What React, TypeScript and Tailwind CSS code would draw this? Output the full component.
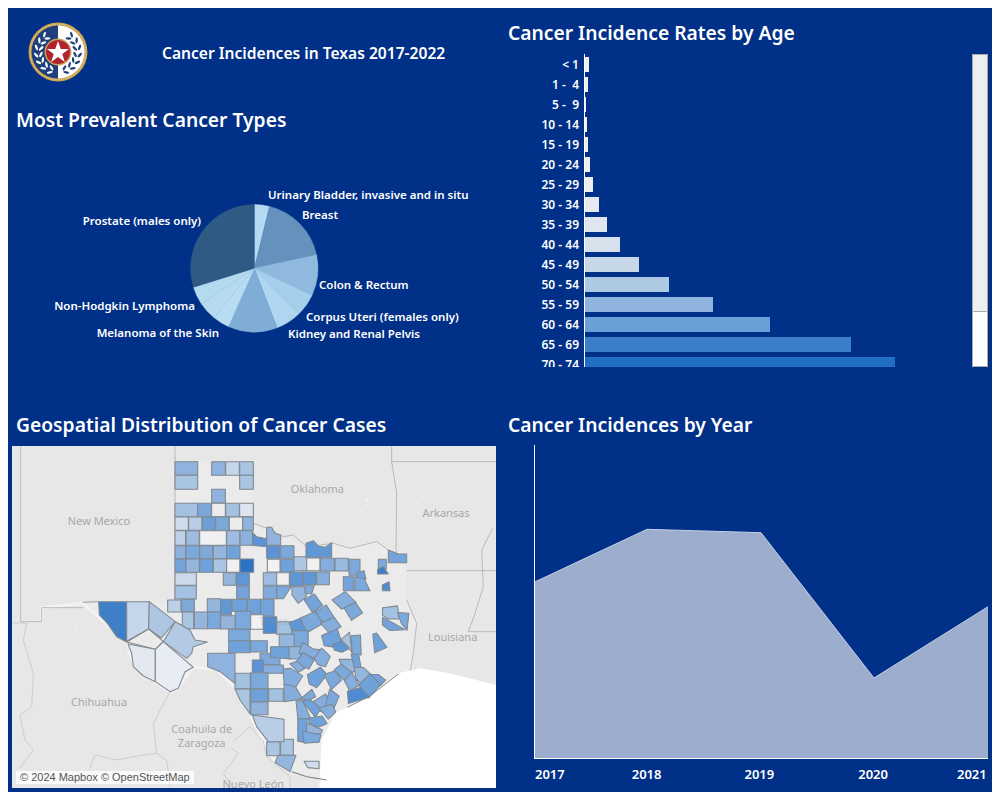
import React from 'react';

const FONT = "font-['Noto_Sans',sans-serif]";

// age bars, colours read off the screenshot
const ageBars = [
  { label: '< 1', w: 4, color: '#f0f0f0' },
  { label: '1 -  4', w: 3, color: '#f0f0f0' },
  { label: '5 -  9', w: 1, color: '#f0f0f0' },
  { label: '10 - 14', w: 2, color: '#f0f0f0' },
  { label: '15 - 19', w: 3, color: '#efefef' },
  { label: '20 - 24', w: 5, color: '#eeeff1' },
  { label: '25 - 29', w: 8, color: '#ebedf0' },
  { label: '30 - 34', w: 14, color: '#e6e9ef' },
  { label: '35 - 39', w: 22, color: '#e0e6ef' },
  { label: '40 - 44', w: 35, color: '#d7e1ec' },
  { label: '45 - 49', w: 54, color: '#c6d7e8' },
  { label: '50 - 54', w: 84, color: '#aec9e3' },
  { label: '55 - 59', w: 128, color: '#8fb4de' },
  { label: '60 - 64', w: 185, color: '#6a9fd7' },
  { label: '65 - 69', w: 266, color: '#3a7fc8' },
  { label: '70 - 74', w: 310, color: '#206fc4' },
];

// clockwise from 12 o'clock, degrees
const pieSlices = [
  { from: 0, to: 13.8, color: '#b5daf1' },
  { from: 13.8, to: 77.8, color: '#6492bd' },
  { from: 77.8, to: 115, color: '#8fbadd' },
  { from: 115, to: 135.6, color: '#a5cfeb' },
  { from: 135.6, to: 159, color: '#aed6f0' },
  { from: 159, to: 204, color: '#80add6' },
  { from: 204, to: 219, color: '#b8dcf2' },
  { from: 219, to: 236, color: '#b6dbf1' },
  { from: 236, to: 252.7, color: '#b4daf0' },
  { from: 252.7, to: 360, color: '#2e5a84' },
];

const pieLabels = [
  { text: 'Urinary Bladder, invasive and in situ', x: 268, y: 199, anchor: 'start' },
  { text: 'Breast', x: 302, y: 219, anchor: 'start' },
  { text: 'Prostate (males only)', x: 201, y: 225, anchor: 'end' },
  { text: 'Colon & Rectum', x: 319, y: 289, anchor: 'start' },
  { text: 'Non-Hodgkin Lymphoma', x: 195, y: 310, anchor: 'end' },
  { text: 'Corpus Uteri (females only)', x: 306, y: 321, anchor: 'start' },
  { text: 'Melanoma of the Skin', x: 219, y: 337, anchor: 'end' },
  { text: 'Kidney and Renal Pelvis', x: 288, y: 338, anchor: 'start' },
];

const grid: [number, number, number, number, string][] = [
  [525, 65, 68, 41, '#8fb3dc'], [635, 65, 41, 41, '#8fb3dc'], [677, 65, 41, 41, '#c6d6e9'], [719, 65, 41, 41, '#a9c5e2'],
  [525, 106, 68, 42, '#a9c5e2'], [719, 106, 41, 42, '#a9c5e2'],
  [635, 148, 41, 41, '#8fb3dc'],
  [525, 190, 68, 40, '#a3c1e1'], [593, 190, 41, 40, '#7ba6d8'], [635, 190, 41, 40, '#ececec'], [677, 190, 41, 40, '#a3c1e1'], [719, 190, 41, 40, '#dde5f0'],
  [525, 231, 40, 40, '#cfdcec'], [566, 231, 40, 40, '#b9cde6'], [607, 231, 39, 40, '#6c9fd8'], [647, 231, 40, 40, '#7ba9dc'], [688, 231, 40, 40, '#ececec'], [728, 231, 32, 40, '#8fb3dc'],
  [525, 272, 32, 44, '#bdd0e7'], [558, 272, 40, 44, '#9dbce0'], [599, 272, 80, 44, '#f0f0f0'], [680, 272, 40, 44, '#9dbce0'], [720, 272, 38, 44, '#8cb0db'],
  [525, 317, 33, 39, '#8cb0db'], [558, 317, 40, 39, '#7ba9dc'], [599, 317, 40, 39, '#7fa8d8'], [640, 317, 40, 39, '#94b5dc'], [680, 317, 40, 39, '#6fa2da'], [800, 317, 40, 38, '#5b93d6'], [842, 317, 40, 38, '#7ba9dc'],
  [525, 357, 33, 40, '#74a3da'], [558, 357, 40, 40, '#94b5dc'], [599, 357, 40, 40, '#6fa2da'], [640, 357, 40, 40, '#a9c5e2'], [680, 357, 40, 40, '#f0f0f0'], [720, 357, 41, 40, '#2b73c4'],
  [802, 358, 38, 38, '#f2f2f2'], [842, 358, 40, 38, '#6fa2da'], [882, 350, 38, 42, '#abc7e4'], [920, 354, 40, 38, '#f0f0f0'], [961, 355, 42, 38, '#85aede'], [1005, 355, 40, 38, '#98b9e0'], [1047, 358, 33, 48, '#7ba9dc'],
  [525, 398, 64, 38, '#cbd9ea'], [525, 437, 64, 40, '#a3c1e1'], [670, 398, 38, 38, '#94b5dc'], [710, 398, 38, 38, '#5f97d6'], [710, 438, 38, 38, '#74a3da'],
  [790, 398, 40, 38, '#9dbce0'], [830, 398, 38, 38, '#f0f0f0'], [870, 396, 40, 42, '#6098d6'], [910, 396, 38, 38, '#6098d6'], [950, 396, 38, 38, '#85aede'], [790, 438, 40, 38, '#80a9da'],
  [503, 480, 40, 36, '#bdd0e7'], [545, 478, 38, 38, '#80a9da'], [622, 476, 40, 40, '#94b5dc'], [662, 478, 32, 46, '#6098d6'], [696, 478, 44, 36, '#6fa2da'], [742, 478, 40, 44, '#6fa2da'], [782, 478, 40, 50, '#74a3da'],
  [547, 516, 34, 50, '#a9c5e2'], [583, 516, 40, 50, '#94b5dc'], [623, 516, 38, 50, '#7ba9dc'], [662, 527, 44, 40, '#94b5dc'], [706, 514, 46, 54, '#7ba9dc'], [752, 524, 38, 44, '#f2f2f2'], [790, 530, 40, 50, '#4f8bd0'], [830, 545, 46, 38, '#a3c1e1'],
  [686, 568, 64, 34, '#7ba9dc'], [686, 602, 64, 36, '#6fa2da'], [752, 602, 50, 34, '#7ba9dc'], [812, 622, 56, 30, '#6fa2da'], [780, 640, 60, 34, '#7fa8d8'], [757, 660, 34, 36, '#5b93d6'], [790, 675, 60, 25, '#85aede'],
  [705, 700, 46, 46, '#a3c1e1'], [752, 698, 52, 48, '#7ba9dc'], [752, 747, 52, 38, '#6fa2da'], [806, 746, 44, 38, '#a3c1e1'], [752, 786, 52, 38, '#8fb3dc'],
  [800, 905, 40, 42, '#a9c5e2'], [842, 898, 38, 48, '#a9c5e2'],
  [1030, 410, 32, 42, '#74a3da'], [1135, 358, 24, 28, '#7ba9dc'],
];

const polys: [string, string][] = [
  ['296,485 380,485 380,606 350,590 322,550 298,525', '#3d80c8'],
  ['380,485 448,485 446,567 380,604', '#c5d6ea'],
  ['448,485 526,545 484,594 446,567', '#aec6e2'],
  ['526,545 570,570 585,600 622,606 580,620 575,640 560,655 490,605', '#b4cae4'],
  ['380,606 446,567 490,604 466,628', '#ebebeb'],
  ['384,612 466,628 466,725 430,708 400,680 395,640', '#e3e8f1'],
  ['466,628 490,605 580,682 555,695 535,745 510,755 466,725', '#e8ecf4'],
  ['758,278 770,290 800,296 800,320 758,316', '#5b93d6'],
  ['800,262 815,262 825,280 842,285 842,316 800,316', '#8fb3dc'],
  ['918,310 940,302 955,318 975,322 995,308 995,352 918,352', '#6098d6'],
  ['830,438 875,438 850,476 830,476', '#7ba9dc'],
  ['623,640 705,640 705,730 660,695 623,680', '#8fb3dc'],
  ['705,747 750,747 750,822 720,780', '#a9c5e2'],
  ['757,825 852,838 852,905 805,905 770,860', '#b9cde6'],
  ['835,946 888,946 870,995 825,968', '#94b5dc'],
  ['876,440 915,440 920,470 895,490 876,465', '#94b5dc'],
  ['915,435 943,435 935,462 915,460', '#80a9da'],
  ['1065,410 1090,412 1110,452 1065,452', '#7ba9dc'],
  ['1070,398 1092,392 1098,418 1072,412', '#6fa2da'],
  ['1133,388 1150,380 1165,402 1133,402', '#3d80c8'],
  ['1147,435 1167,425 1170,452 1147,452', '#4f8bd0'],
  ['1165,330 1195,342 1220,342 1220,368 1165,368', '#74a3da'],
];

// south-east counties, measured from a crop, drawn with a translate
const eastPolys: [string, string][] = [
  ['255,30 283,15 305,45 278,65', '#74a3da'],
  ['288,68 318,48 342,85 312,100', '#7ba9dc'],
  ['210,100 245,85 262,120 218,120', '#5f97d6'],
  ['245,85 285,68 305,100 262,125', '#7ba9dc'],
  ['305,100 342,85 360,110 330,128', '#85aede'],
  ['340,30 375,8 405,38 365,55', '#85aede'],
  ['375,55 405,40 425,68 395,88', '#7ba9dc'],
  ['490,55 530,50 535,85 505,85 490,75', '#a3c1e1'],
  ['490,85 520,100 550,118 510,120 490,105', '#74a3da'],
  ['535,70 565,72 560,118 545,100', '#7ba9dc'],
  ['460,135 470,132 498,170 465,185', '#6fa2da'],
  ['308,138 350,120 362,155 345,170 315,165', '#6fa2da'],
  ['340,165 362,155 385,175 365,185 345,180', '#5f97d6'],
  ['365,150 388,130 395,185 385,170', '#a3c1e1'],
  ['395,140 420,138 422,192 398,190', '#7ba9dc'],
  ['218,125 262,125 262,165 240,175 222,165', '#7ba9dc'],
  ['180,135 220,135 220,170 180,170', '#94b5dc'],
  ['155,172 210,172 208,205 155,200', '#6fa2da'],
  ['208,172 240,172 240,205 210,205', '#94b5dc'],
  ['240,190 250,160 280,178 300,180 285,205 255,190', '#85aede'],
  ['232,215 250,190 280,210 265,235 245,225', '#7ba9dc'],
  ['285,205 305,178 328,200 315,228 295,222', '#85aede'],
  ['212,222 232,215 252,235 235,245', '#85aede'],
  ['265,255 300,235 318,255 290,290 270,280', '#6fa2da'],
  ['315,255 345,245 362,270 335,295', '#7ba9dc'],
  ['192,240 212,238 245,258 225,290 195,285', '#85aede'],
  ['195,285 225,292 245,325 195,332', '#85aede'],
  ['345,240 368,222 395,245 375,270', '#7ba9dc'],
  ['360,210 395,210 410,238 395,245 365,222', '#94b5dc'],
  ['395,195 415,195 422,232 405,238', '#6fa2da'],
  ['375,272 395,250 415,285 390,300', '#85aede'],
  ['405,235 430,235 455,258 425,280 410,265', '#94b5dc'],
  ['455,255 475,255 495,270 480,285', '#74a3da'],
  ['420,285 450,255 478,285 445,320', '#6fa2da'],
  ['385,305 420,295 445,320 388,338', '#4f8bd0'],
  ['245,325 275,300 285,320 265,330', '#7ba9dc'],
  ['275,340 315,315 330,340 310,365 285,355', '#85aede'],
  ['330,300 355,320 340,355 318,345', '#7ba9dc'],
  ['230,335 248,335 270,385 235,385', '#85aede'],
  ['250,335 270,330 300,355 285,378', '#6fa2da'],
  ['300,355 335,345 345,365 325,385', '#85aede'],
  ['268,385 305,380 318,400 295,410 270,400', '#6fa2da'],
  ['260,400 305,420 300,430 262,430', '#94b5dc'],
  ['235,390 260,390 258,425 250,453 235,450', '#6fa2da'],
  ['250,425 300,435 295,455 255,458', '#7ba9dc'],
  ['255,515 295,515 295,535 265,532', '#cfdcec'],
];

const mapLabels = [
  { text: 'New Mexico', x: 297, y: 254 },
  { text: 'Oklahoma', x: 952, y: 160 },
  { text: 'Arkansas', x: 1338, y: 231 },
  { text: 'Louisiana', x: 1358, y: 604 },
  { text: 'Chihuahua', x: 297, y: 798 },
  { text: 'Coahuila de', x: 605, y: 879 },
  { text: 'Zaragoza', x: 605, y: 922 },
  { text: 'Nuevo León', x: 760, y: 1044 },
];

const borderLines = [
  '62,18 62,545 125,545 125,503 250,503',
  '525,18 525,485',
  '1175,18 1175,65 1488,65',
  '1175,65 1190,160 1188,340',
  '1220,392 1488,392',
  '1405,575 1488,575',
  '1220,480 1250,550 1240,640 1230,695',
  '760,250 800,265 850,290 880,285 920,320 1000,310 1050,325 1130,305 1165,330',
  '1478,265 1445,330 1450,440 1425,520 1405,575',
];

const softLines = [
  '38,548 80,550 70,600 100,700 95,800 60,825 75,900 100,930 60,985',
  '510,755 460,850 470,940 500,960 510,1040',
  '270,985 285,945 350,960 430,945 470,940',
  '700,905 750,860 790,905 800,950 870,1010 870,1044',
  '695,925 715,940 670,1000 700,1044',
];

// pale town specks on the base map
const specks = [
  [1100, 180, 6], [1040, 100, 3], [1085, 215, 4], [1000, 105, 3], [990, 210, 3], [930, 260, 3], [860, 200, 2], [1270, 170, 4], [1360, 150, 3], [1300, 290, 3],
  [1110, 270, 3], [205, 370, 3], [225, 560, 4], [155, 720, 3], [330, 880, 3], [640, 760, 3], [1260, 340, 3], [1310, 650, 3], [1400, 660, 3], [210, 30, 3],
];

const yearTicks = [
  { y: '2017', cls: 'ml-[1px]' },
  { y: '2018', cls: 'ml-[67px]' },
  { y: '2019', cls: 'ml-[83px]' },
  { y: '2020', cls: 'ml-[84px]' },
  { y: '2021', cls: 'ml-[69px]' },
];

const polar = (cx: number, cy: number, r: number, deg: number) => {
  const a = (deg * Math.PI) / 180;
  return [cx + r * Math.sin(a), cy - r * Math.cos(a)];
};

const slicePath = (cx: number, cy: number, r: number, from: number, to: number) => {
  const [x1, y1] = polar(cx, cy, r, from);
  const [x2, y2] = polar(cx, cy, r, to);
  return `M${cx} ${cy}L${x1} ${y1}A${r} ${r} 0 ${to - from > 180 ? 1 : 0} 1 ${x2} ${y2}Z`;
};

// the crop readings came out a bit tight, push each county out from its middle
const grow = (points: string, k: number) => {
  const pts = points.split(' ').map((p) => p.split(',').map(Number));
  const mx = pts.reduce((s, p) => s + p[0], 0) / pts.length;
  const my = pts.reduce((s, p) => s + p[1], 0) / pts.length;
  return pts.map(([x, y]) => `${mx + (x - mx) * k},${my + (y - my) * k}`).join(' ');
};

const Seal = () => {
  const leaves = [38, 58, 78, 98, 118, 138, 158];
  return (
    <svg width="60" height="60" viewBox="0 0 60 60" className="shrink-0">
      <circle cx="30" cy="30" r="29.5" fill="#c8a04e" />
      <circle cx="30" cy="30" r="27.8" fill="none" stroke="#f1dfae" strokeWidth="1" strokeDasharray="1 1.2" />
      <path d="M30 3.5A26.5 26.5 0 0 0 30 56.5Z" fill="#1f3f7c" />
      <path d="M30 3.5A26.5 26.5 0 0 1 30 56.5Z" fill="#ffffff" />
      {leaves.map((deg) => {
        const pairs = [
          { r: 22, tilt: 35 },
          { r: 17.2, tilt: -35 },
        ];
        return pairs.map((p) => {
          const [rx, ry] = polar(30, 30, p.r, deg);
          const [lx, ly] = polar(30, 30, p.r, 360 - deg);
          return (
            <g key={`${deg}-${p.r}`}>
              <ellipse cx={rx} cy={ry} rx="3" ry="1.2" fill="#1f3f7c" transform={`rotate(${deg + p.tilt} ${rx} ${ry})`} />
              <ellipse cx={lx} cy={ly} rx="3" ry="1.2" fill="#ffffff" transform={`rotate(${-deg - p.tilt} ${lx} ${ly})`} />
            </g>
          );
        });
      })}
      <circle cx="30" cy="30" r="13.5" fill="#c9a25a" />
      <circle cx="30" cy="30" r="12" fill="#b3232e" />
      <polygon points="30,19 32.7,27 41,27 34.3,32 36.8,40 30,35.1 23.2,40 25.7,32 19,27 27.3,27" fill="#ffffff" />
    </svg>
  );
};

const SectionTitle = ({ children, className = '' }: { children: React.ReactNode; className?: string }) => (
  <h2 className={`text-[19.25px] leading-[28px] font-semibold text-white ${className}`}>{children}</h2>
);

const PrevalentPie = () => (
  <svg width="484" height="226" viewBox="12 134 484 226" className="block">
    {pieSlices.map((s) => (
      <path key={s.from} d={slicePath(254.3, 268.3, 63.7, s.from, s.to)} fill={s.color} stroke={s.color} strokeWidth="0.5" />
    ))}
    {pieLabels.map((l) => (
      <text key={l.text} x={l.x} y={l.y} textAnchor={l.anchor as 'start' | 'end'} fill="#ffffff" fontSize="11.5" fontWeight="600">
        {l.text}
      </text>
    ))}
  </svg>
);

const CountyMap = () => (
  <div className="relative h-[342px] w-[484px] overflow-hidden bg-[#e7e7e7]">
    <svg width="484" height="342" viewBox="36 18 1452 1026" className="block">
      <polygon
        points="525,65 760,65 760,248 800,265 850,290 920,320 1000,310 1050,325 1130,305 1165,330 1220,345 1220,480 1250,550 1240,640 1230,695 1195,700 1110,765 1040,802 1000,830 965,900 960,1015 875,995 825,965 790,900 750,825 705,745 650,690 580,680 535,745 510,755 466,725 430,708 395,660 380,606 300,535 248,487 525,485"
        fill="#ebebeb"
      />
      {specks.map(([x, y, r]) => (
        <circle key={`${x}-${y}`} cx={x} cy={y} r={r} fill="#f0f0f0" />
      ))}
      {/* pale halo along the Rio Grande and the New Mexico line */}
      <polyline
        className="blur-[1px]"
        points="125,545 125,503 248,490 300,535 380,606 395,660 430,708 466,725 510,755 535,745 580,680 650,690 705,745 750,825 790,900 825,965 875,995"
        fill="none"
        stroke="#f2f2f2"
        strokeWidth="9"
        strokeLinejoin="round"
      />
      {softLines.map((p) => (
        <polyline key={p} points={p} fill="none" stroke="#c6c6c6" strokeWidth="2.5" />
      ))}
      {borderLines.map((p) => (
        <polyline key={p} points={p} fill="none" stroke="#b0b0b0" strokeWidth="2.5" />
      ))}
      <polyline points="248,487 296,485" fill="none" stroke="#8a8a8a" strokeWidth="2.5" />
      <polygon
        className="blur-[1px]"
        points="958,1044 965,900 985,860 1010,815 1045,800 1110,765 1195,700 1260,685 1350,700 1488,735 1488,1044"
        fill="#ffffff"
      />
      <polyline points="875,995 920,1010 980,1020" fill="none" stroke="#7c7c7c" strokeWidth="3" />
      <polyline points="1042,802 1110,768 1195,702" fill="none" stroke="#7f8790" strokeWidth="3" />
      <g stroke="#7f8790" strokeWidth="3.2" strokeLinejoin="round">
        {grid.map(([x, y, w, h, fill]) => (
          <rect key={`${x}-${y}`} x={x} y={y} width={w} height={h} fill={fill} />
        ))}
        {polys.map(([points, fill]) => (
          <polygon key={points} points={points} fill={fill} />
        ))}
        <g transform="translate(660 450)">
          {eastPolys.map(([points, fill]) => (
            <polygon key={points} points={grow(points, 1.12)} fill={fill} />
          ))}
        </g>
      </g>
      {mapLabels.map((l) => (
        <text key={l.text} x={l.x} y={l.y} textAnchor="middle" fill="#a8a8a8" fontSize="33">
          {l.text}
        </text>
      ))}
      <text x="820" y="555" textAnchor="middle" fill="#9a9a9a" fillOpacity="0.35" fontSize="33">
        Texas
      </text>
    </svg>
    <div className="absolute bottom-[4px] left-[4px] bg-white/80 px-1 font-['Liberation_Sans',sans-serif] text-[11px] leading-[13px] text-[#555555]">
      © 2024 Mapbox © OpenStreetMap
    </div>
  </div>
);

const AgeBars = () => (
  <div className="flex h-[313px] items-start">
    <div className="flex h-[313px] w-[464px] overflow-hidden">
      <div className="flex w-[76px] shrink-0 flex-col gap-[5px] pt-[3px]">
        {ageBars.map((b) => (
          <div key={b.label} className="h-[15px] shrink-0 whitespace-pre pr-[5px] text-right text-[12px] font-semibold leading-[15px] text-white">
            {b.label}
          </div>
        ))}
      </div>
      <div className="flex h-[313px] flex-1 flex-col gap-[5px] overflow-hidden border-l border-white pt-[3px]">
        {ageBars.map((b) => (
          <div key={b.label} className="h-[15px] shrink-0" style={{ width: b.w, backgroundColor: b.color }} />
        ))}
      </div>
    </div>
    <div className="flex h-[313px] w-[16px] flex-col border border-[#aaaaaa] bg-white">
      <div className="h-[257px] border-b border-[#aaaaaa] bg-[#efefef]" />
    </div>
  </div>
);

const YearArea = () => (
  <div>
    <svg width="458" height="314" viewBox="530 445 458 314" className="ml-[22px] block">
      <polygon points="534.7,582 647,529.3 761,532.7 874,678 988,606.7 988,758 534.7,758" fill="#9cadce" />
      <polyline points="534.7,582 647,529.3 761,532.7 874,678 988,606.7" fill="none" stroke="#c4cfe4" strokeWidth="1" />
      <line x1="534.5" y1="445" x2="534.5" y2="759" stroke="#ffffff" strokeWidth="1" />
      <line x1="534" y1="758.5" x2="988" y2="758.5" stroke="#ffffff" strokeWidth="1" />
    </svg>
    <div className="ml-[26px] mt-[6px] flex text-[13px] font-semibold leading-[18px] text-white">
      {yearTicks.map((t) => (
        <span key={t.y} className={t.cls}>{t.y}</span>
      ))}
    </div>
  </div>
);

export default function App() {
  return (
    <div className={`h-[800px] w-[1000px] overflow-hidden bg-white p-2 ${FONT}`}>
      <div className="grid h-[784px] w-[984px] grid-cols-[492px_492px] grid-rows-[402px_382px] bg-[#003087]">
        <section className="pl-1">
          <div className="flex h-[74px] items-start pl-[16px] pt-[14px]">
            <Seal />
            <h1 className="ml-[74px] mt-[19px] text-[15.6px] font-semibold leading-[24px] text-white">
              Cancer Incidences in Texas 2017-2022
            </h1>
          </div>
          <SectionTitle className="ml-[4px] mt-[24px]">Most Prevalent Cancer Types</SectionTitle>
          <PrevalentPie />
        </section>
        <section className="pl-[8px]">
          <SectionTitle className="mb-[7px] mt-[11px]">Cancer Incidence Rates by Age</SectionTitle>
          <AgeBars />
        </section>
        <section className="pl-1">
          <SectionTitle className="mb-[7px] ml-[4px] mt-[1px]">Geospatial Distribution of Cancer Cases</SectionTitle>
          <CountyMap />
        </section>
        <section className="pl-[8px]">
          <SectionTitle className="mb-[6px] mt-[1px]">Cancer Incidences by Year</SectionTitle>
          <YearArea />
        </section>
      </div>
    </div>
  );
}
